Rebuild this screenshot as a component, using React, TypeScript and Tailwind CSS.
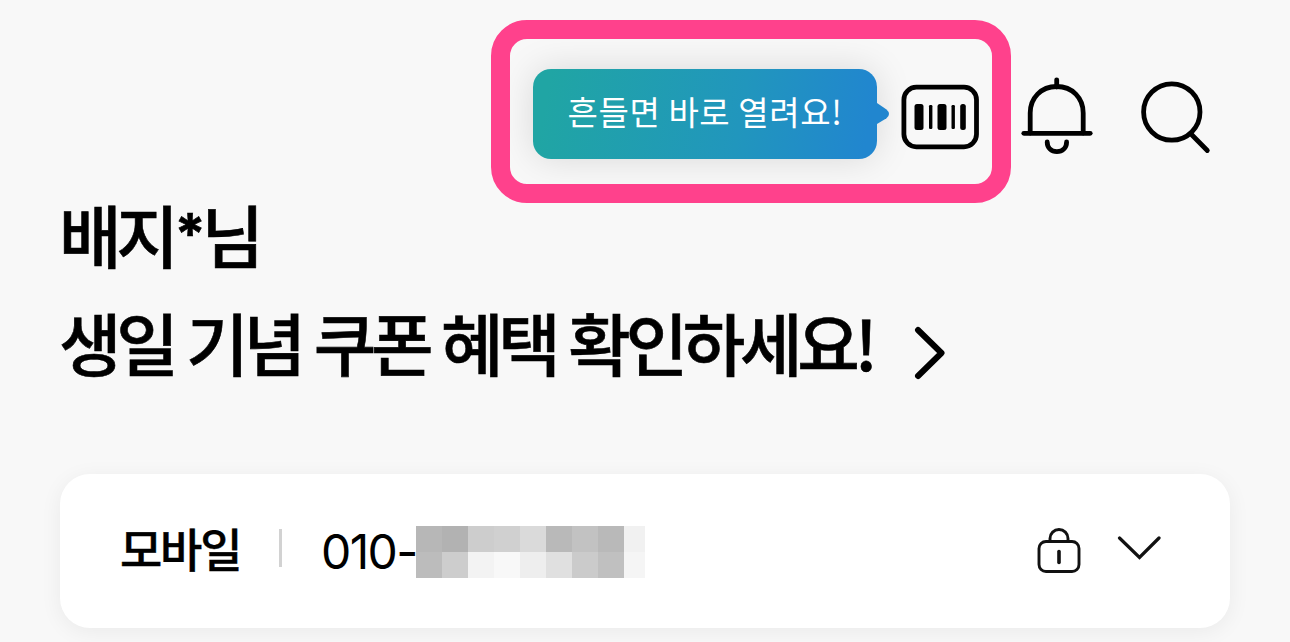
import React from "react";

const maskRows = [
  ["bg-[#b7b7b7]", "bg-[#b2b2b2]", "bg-[#cdcdcd]", "bg-[#d0d0d0]", "bg-[#dadada]", "bg-[#b9b9b9]", "bg-[#c2c2c2]", "bg-[#b9b9b9]", "bg-[#f1f1f1]"],
  ["bg-[#bcbcbc]", "bg-[#cdcdcd]", "bg-[#f3f3f3]", "bg-[#f8f8f8]", "bg-[#eeeeee]", "bg-[#e0e0e0]", "bg-[#cbcbcb]", "bg-[#c0c0c0]", "bg-[#f5f5f5]"],
];

function BarcodeIcon() {
  return (
    <svg width="78" height="66" viewBox="0 0 78 66" className="shrink-0">
      <rect x="2.9" y="3.2" width="72.6" height="59.6" rx="12.5" fill="none" stroke="#000" strokeWidth="4.8" />
      <rect x="13.5" y="20" width="9" height="26" rx="2.5" />
      <rect x="28" y="21" width="3.4" height="24" rx="1.2" />
      <rect x="36.5" y="20" width="9" height="26" rx="2.5" />
      <rect x="50.5" y="21" width="3.4" height="24" rx="1.2" />
      <rect x="59.2" y="20" width="5.6" height="26" rx="2.5" />
    </svg>
  );
}

function BellIcon() {
  return (
    <svg width="72" height="78" viewBox="0 0 72 78" fill="none" stroke="#000" strokeWidth="4.8" strokeLinecap="round" className="shrink-0">
      <path d="M35.7 2.8V10" />
      <path d="M9.2 56V36C9.2 21 20 9.5 35.7 9.5S62.2 21 62.2 36V56" />
      <path d="M2.8 56.3H69.2" />
      <path d="M26.2 65C26.2 71 30.5 74.6 35.9 74.6S45.6 71 45.6 65" />
    </svg>
  );
}

function SearchIcon() {
  return (
    <svg width="70" height="74" viewBox="0 0 70 74" fill="none" stroke="#000" strokeWidth="4.8" strokeLinecap="round" className="shrink-0">
      <circle cx="30.8" cy="31" r="28.2" />
      <path d="M50.5 53.5L66.3 69.5" />
    </svg>
  );
}

function LockIcon() {
  return (
    <svg width="44" height="46" viewBox="0 0 44 46" fill="none" stroke="#111" strokeWidth="2.9" className="shrink-0">
      <rect x="2" y="13.5" width="40" height="30" rx="7" />
      <path d="M13 13.5V10.5A9 9 0 0 1 31 10.5V13.5" />
      <path d="M22 23.5V34.5" strokeWidth="3.6" strokeLinecap="round" />
    </svg>
  );
}

export default function App() {
  return (
    <div className="h-[642px] w-[1290px] overflow-hidden bg-[#f8f8f8] pt-[20px] font-['Noto_Sans_CJK_KR',sans-serif] text-black">
      <header className="flex h-[183px] items-start justify-end pr-[80px]">
        <div className="flex h-[183px] w-[520px] shrink-0 items-start overflow-hidden rounded-[36px] border-[19px] border-[#ff418c] pl-[23px] pt-[30px]">
          <div className="flex h-[90px] w-[344px] shrink-0 items-center justify-center rounded-[18px] bg-[linear-gradient(100deg,#20a5a4_5%,#2196bd_60%,#2186cf_96%)] pb-[6px] shadow-[0_0_36px_rgba(0,0,0,0.13)]">
            <span className="whitespace-nowrap text-[33px] font-normal leading-[48px] tracking-[0.6px] text-white">흔들면 바로 열려요!</span>
          </div>
          <svg width="12" height="22" viewBox="0 0 12 22" className="mt-[34px] shrink-0">
            <path d="M0 0L9.5 6.5Q14.5 11 9.5 15.2L0 21Z" fill="#2186cf" />
          </svg>
          <div className="ml-[12px] mt-[15px] flex">
            <BarcodeIcon />
          </div>
        </div>
        <div className="ml-[10px] mt-[57px] flex">
          <BellIcon />
        </div>
        <div className="-mr-px ml-[48px] mt-[61px] flex">
          <SearchIcon />
        </div>
      </header>

      <section className="-mt-[23px] h-[294px] pl-[59px] text-[68px] font-medium leading-[108px] tracking-[-5.3px] [-webkit-text-stroke:0.6px_#000] [word-spacing:2.8px]">
        <p className="h-[108px] whitespace-nowrap">
          배지<span className="inline-block w-[28px] -translate-y-[9px] pl-px font-['Inter',sans-serif] text-[56px] font-bold leading-[60px]">*</span>님
        </p>
        <div className="flex">
          <p className="w-[810px] whitespace-nowrap">생일 기념 쿠폰 혜택 확인하세요!</p>
          <svg width="32" height="54" viewBox="0 0 32 54" fill="none" stroke="#000" strokeWidth="6" strokeLinecap="round" strokeLinejoin="round" className="ml-[45px] mt-[38px] shrink-0">
            <path d="M4 4L27.5 27L4 50" />
          </svg>
        </div>
      </section>

      <section className="mx-[60px] flex h-[154px] items-center rounded-[30px] bg-white pl-[60px] pr-[69px] shadow-[0_4px_22px_rgba(0,0,0,0.06)]">
        <span className="w-[159px] whitespace-nowrap pb-[8px] text-[46px] font-medium leading-[60px] tracking-[-2.2px] [-webkit-text-stroke:0.4px_#000]">모바일</span>
        <span className="-mt-[6px] h-[38px] w-[3px] bg-[#d2d2d2]" />
        <span className="ml-[39px] w-[95px] whitespace-nowrap pt-px font-['Inter',sans-serif] text-[48px] font-normal leading-[60px] tracking-[-1.6px]">010-</span>
        <div className="mt-[2px] grid grid-cols-[repeat(8,26px)_21px] grid-rows-[26px_26px]">
          {maskRows.flat().map((color, i) => (
            <span key={i} className={color} />
          ))}
        </div>
        <div className="ml-auto flex items-start">
          <LockIcon />
          <svg width="44" height="26" viewBox="0 0 44 26" fill="none" stroke="#111" strokeWidth="3.2" strokeLinecap="round" className="ml-[36px] mt-[7px] shrink-0">
            <path d="M2.5 3L22.5 22.5L42 3" />
          </svg>
        </div>
      </section>
    </div>
  );
}
